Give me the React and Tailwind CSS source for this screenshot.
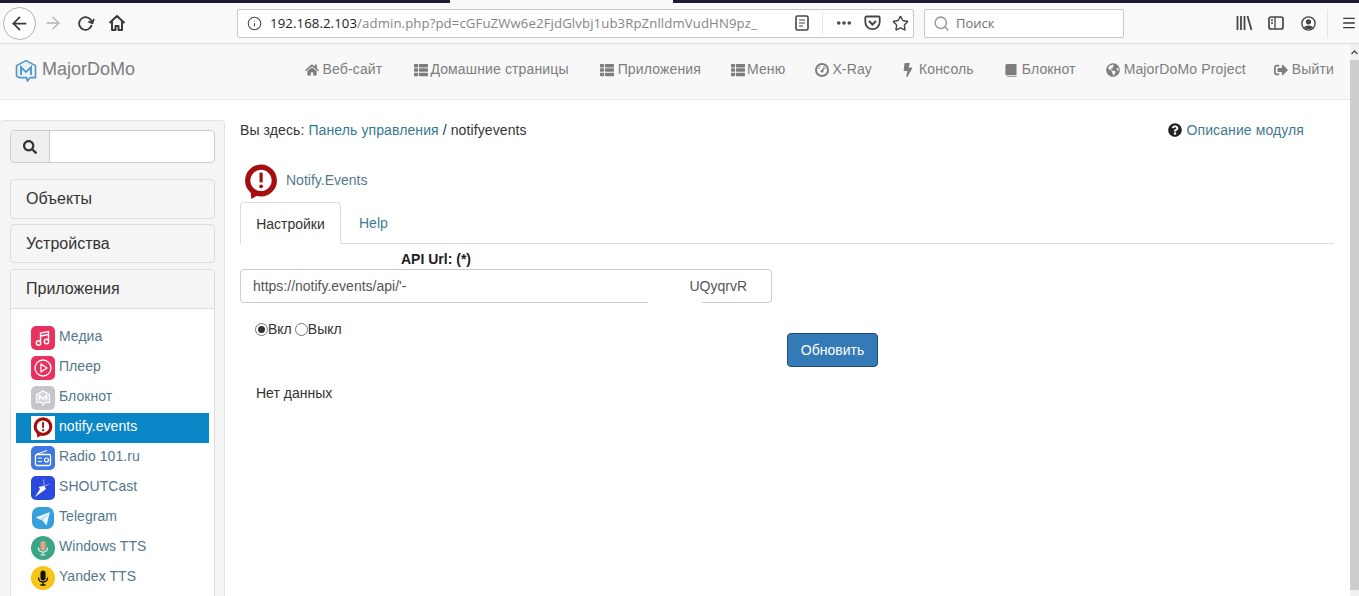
import React from "react";
import { ArrowLeft, ArrowRight, RotateCw, Info, Star, Search, Menu, MoreHorizontal } from "lucide-react";
import { FaHome, FaThList, FaBolt, FaGlobeAmericas, FaSignOutAlt, FaQuestionCircle, FaSearch } from "react-icons/fa";

function MdLogo({ size = 22, color = "#4f94c4", fill = "#e8f2f9" }) {
  return (
    <svg width={size} height={size * 1.1} viewBox="0 0 22 24" fill="none">
      <path d="M11 1.5 20.5 6.5V18.5H15L12.5 22 11.5 18.5H4L1.5 17V6.5Z" fill={fill} stroke={color} strokeWidth="1.6" strokeLinejoin="round" />
      <path d="M6 16V8L11 13 16 8V16" stroke={color} strokeWidth="1.8" fill="none" />
    </svg>
  );
}

function NotifyLogo({ size = 32 }) {
  return (
    <svg width={size} height={(size * 34) / 32} viewBox="0 0 32 34">
      <circle cx="16" cy="15.5" r="12.5" fill="#fff" stroke="#a50f10" strokeWidth="5" />
      <path d="M6 24 7 33 15 28Z" fill="#a50f10" />
      <rect x="14.6" y="8" width="3" height="9.5" rx="1" fill="#a50f10" />
      <circle cx="16.1" cy="21" r="1.8" fill="#a50f10" />
    </svg>
  );
}

function GaugeIcon({ size = 14, className }) {
  return (
    <svg width={size} height={size} viewBox="0 0 14 14" className={className}>
      <circle cx="7" cy="7" r="6" fill="#fff" stroke="currentColor" strokeWidth="2" />
      <path d="M3.2 5.5h1.2M5 3.3v1.2M9 3.3v1.2M9.6 5.5h1.2" stroke="currentColor" strokeWidth="1.2" />
      <path d="M7 8 9.2 4.8" stroke="currentColor" strokeWidth="1.4" />
      <circle cx="7" cy="8.2" r="1.4" fill="currentColor" />
    </svg>
  );
}

function SolidBook({ size = 14, className }) {
  return (
    <svg width={size} height={size} viewBox="0 0 14 14" className={className}>
      <path d="M3 1h9.5v11.5H3A1.6 1.6 0 0 1 1.4 11V2.6A1.6 1.6 0 0 1 3 1Z" fill="currentColor" />
      <path d="M3 12.5h9.5" stroke="#f8f8f8" strokeWidth=".8" />
      <path d="M3 13.4h9.5" stroke="currentColor" strokeWidth=".8" />
    </svg>
  );
}

const icons = {
  media: (
    <svg width="24" height="24" viewBox="0 0 24 24">
      <rect width="24" height="24" rx="5" fill="#e8315f" />
      <path d="M9.5 17V7l8-1.5V15" fill="none" stroke="#fff" strokeWidth="1.4" />
      <circle cx="7.5" cy="17" r="2.2" fill="none" stroke="#fff" strokeWidth="1.4" />
      <circle cx="15.5" cy="15.5" r="2.2" fill="none" stroke="#fff" strokeWidth="1.4" />
      <path d="M9.5 10l8-1.5" stroke="#fff" strokeWidth="1.4" />
    </svg>
  ),
  player: (
    <svg width="24" height="24" viewBox="0 0 24 24">
      <rect width="24" height="24" rx="5" fill="#e8315f" />
      <circle cx="12" cy="12" r="8" fill="none" stroke="#fff" strokeWidth="1.3" />
      <path d="M10 8l6 4-6 4Z" fill="none" stroke="#fff" strokeWidth="1.3" strokeLinejoin="round" />
    </svg>
  ),
  note: (
    <svg width="24" height="24" viewBox="0 0 24 24">
      <rect width="24" height="24" rx="5" fill="#c5c5cb" />
      <path d="M12 5l6.5 3.5v8H14l-2 2.5-1-2.5H5.5v-8Z" fill="#d6d6da" stroke="#fff" strokeWidth="1.2" />
      <path d="M8.5 14.5v-5L12 13l3.5-3.5v5" fill="none" stroke="#fff" strokeWidth="1.4" />
    </svg>
  ),
  notify: (
    <span className="flex h-6 w-6 items-center justify-center bg-white">
      <NotifyLogo size={20} />
    </span>
  ),
  radio: (
    <svg width="24" height="24" viewBox="0 0 24 24">
      <rect width="24" height="24" rx="5" fill="#3f78e0" />
      <path d="M5 8.5 16 4.5" stroke="#fff" strokeWidth="1.2" />
      <rect x="4.5" y="8.5" width="15" height="11" rx="1.5" fill="none" stroke="#fff" strokeWidth="1.3" />
      <path d="M7 12h4M7 15.5h4" stroke="#fff" strokeWidth="1.2" />
      <circle cx="15.5" cy="14" r="2" fill="none" stroke="#fff" strokeWidth="1.2" />
    </svg>
  ),
  shout: (
    <svg width="24" height="24" viewBox="0 0 24 24">
      <rect width="24" height="24" rx="5" fill="#2b49dc" />
      <path d="M20 7.5 13.5 10.5l1.5 2.5-11 8 5-8-1.5-2 5-1Z" fill="#fff" />
      <path d="M12 9.5c1.8-1 .8-4 .3-6" fill="none" stroke="#9fb0f5" strokeWidth="1" />
    </svg>
  ),
  telegram: (
    <svg width="24" height="24" viewBox="0 0 24 24">
      <rect x="1" y="1" width="22" height="22" rx="7" fill="#37a0da" />
      <path d="M4.5 11.5 19 6l-3.5 13.5-4-5Z" fill="#e8f4fb" />
      <path d="M11.5 14.5 19 6l-9.5 7Z" fill="#b9dcf0" />
    </svg>
  ),
  wintts: (
    <svg width="24" height="24" viewBox="0 0 24 24">
      <circle cx="12" cy="12" r="12" fill="#3ba587" />
      <rect x="9.5" y="5" width="5" height="9.5" rx="2.5" fill="#e9a084" />
      <path d="M7.5 11.5c0 6 9 6 9 0M12 16v3M9.5 19h5" fill="none" stroke="#e8f3ee" strokeWidth="1.2" />
    </svg>
  ),
  yantts: (
    <svg width="24" height="24" viewBox="0 0 24 24">
      <circle cx="12" cy="12" r="12" fill="#f5c518" />
      <rect x="9.5" y="4.5" width="5" height="10" rx="2.5" fill="#111" />
      <path d="M7.5 11.5c0 6 9 6 9 0M12 16v3M9.5 19h5" fill="none" stroke="#111" strokeWidth="1.3" />
    </svg>
  ),
};

const sideItems = [
  ["media", "Медиа"],
  ["player", "Плеер"],
  ["note", "Блокнот"],
  ["notify", "notify.events", true],
  ["radio", "Radio 101.ru"],
  ["shout", "SHOUTCast"],
  ["telegram", "Telegram"],
  ["wintts", "Windows TTS"],
  ["yantts", "Yandex TTS"],
];

const navItems = [
  [FaHome, "Веб-сайт", "ml-0 gap-[4px]"],
  [FaThList, "Домашние страницы", "ml-[32px] gap-[2px]"],
  [FaThList, "Приложения", "ml-[31px] gap-[4px]"],
  [FaThList, "Меню", "ml-[30px] gap-[2px]"],
  [GaugeIcon, "X-Ray", "ml-[30px] gap-[3px]"],
  [FaBolt, "Консоль", "ml-[29px] gap-[4px]"],
  [SolidBook, "Блокнот", "ml-[30px] gap-[4px]"],
  [FaGlobeAmericas, "MajorDoMo Project", "ml-[30px] gap-[4px]"],
  [FaSignOutAlt, "Выйти", "ml-[28px] gap-[4px]"],
];

function Accordion({ children, className }) {
  return (
    <div className={`flex items-center rounded-[4px] border border-[#dddddd] bg-[#f5f5f5] pl-[15px] text-[16px] text-[#333333] ${className}`}>
      {children}
    </div>
  );
}

function Radio({ on }) {
  return (
    <span className="flex h-[13px] w-[13px] items-center justify-center rounded-full border border-[#767676] bg-white">
      {on && <span className="h-[7px] w-[7px] rounded-full bg-[#333333]" />}
    </span>
  );
}

export default function App() {
  return (
    <div className="flex h-[596px] w-[1359px] flex-col overflow-hidden bg-white font-['Liberation_Sans',sans-serif] text-[14px] text-[#333333]">
      {/* Window strip */}
      <div className="flex h-[3px] shrink-0">
        <div className="w-[450px] bg-[#1b1b33]" />
        <div className="w-[223px] bg-[#f9f9fa]" />
        <div className="flex-1 bg-[#1b1b33]" />
      </div>

      {/* Browser toolbar */}
      <div className="flex h-[41px] shrink-0 items-center border-b border-[#dcdcde] bg-[#f9f9fa] font-['Open_Sans',sans-serif]">
        <div className="ml-[3px] flex h-[33px] w-[33px] items-center justify-center rounded-full border border-[#b1b1b3] bg-white">
          <ArrowLeft size={21} strokeWidth={2} className="text-[#38383d]" />
        </div>
        <ArrowRight size={20} strokeWidth={1.6} className="ml-[7px] text-[#b4b4b6]" />
        <RotateCw size={17} strokeWidth={2.6} className="ml-[14px] rotate-[20deg] text-[#38383d]" />
        <svg width="18" height="18" viewBox="0 0 18 18" className="ml-[14px]" fill="none" stroke="#38383d" strokeWidth="2">
          <path d="M1.5 9 9 2l7.5 7M4 7.5V16h3.5v-4h3v4H14V7.5" strokeLinejoin="round" />
        </svg>
        <div className="ml-[111px] flex h-[29px] w-[677px] items-center rounded-[2px] border border-[#c8c8ca] bg-white">
          <Info size={15} strokeWidth={1.7} className="ml-[9px] text-[#45454a]" />
          <span className="ml-[8px] w-[490px] truncate whitespace-nowrap pt-[1px] text-[13.2px] tracking-[0.1px] text-[#85858a]">
            <span className="text-[#1c1c20]">192.168.2.103</span>/admin.php?pd=cGFuZWw6e2FjdGlvbj1ub3RpZnlldmVudHN9pz_
          </span>
          <svg width="14" height="16" viewBox="0 0 14 16" className="ml-[35px]" fill="none" stroke="#45454a" strokeWidth="1.6">
            <rect x="1" y="1" width="12" height="14" rx="1.5" />
            <path d="M4 5h6M4 8h6M4 11h4" strokeWidth="1.2" />
          </svg>
          <div className="ml-[13px] h-[22px] w-px bg-[#e4e4e6]" />
          <MoreHorizontal size={18} strokeWidth={2.8} className="ml-[12px] text-[#45454a]" />
          <svg width="17" height="16" viewBox="0 0 17 16" className="ml-[11px]" fill="none" stroke="#45454a" strokeWidth="1.8">
            <path d="M2.5 1.5h12A1.2 1.2 0 0 1 15.7 2.7V7A7.2 7.2 0 0 1 1.3 7V2.7A1.2 1.2 0 0 1 2.5 1.5Z" />
            <path d="M5 6l3.5 3.5L12 6" strokeWidth="2" />
          </svg>
          <Star size={17} strokeWidth={2} className="ml-[11px] text-[#45454a]" />
        </div>
        <div className="ml-[10px] flex h-[29px] w-[200px] items-center rounded-[2px] border border-[#c8c8ca] bg-white">
          <Search size={17} strokeWidth={2.2} className="ml-[8px] text-[#9b9b9f]" />
          <span className="ml-[6px] pt-[1px] text-[13px] text-[#6e6e73]">Поиск</span>
        </div>
        <svg width="17" height="16" viewBox="0 0 17 16" className="ml-[112px]" fill="none" stroke="#45454a" strokeWidth="1.8">
          <path d="M1.5 1v14M5 1v14M8.5 1v14M11.5 1l4 14" />
        </svg>
        <svg width="16" height="14" viewBox="0 0 16 14" className="ml-[15px]" fill="none" stroke="#45454a" strokeWidth="1.7">
          <rect x="1" y="1" width="14" height="12" rx="2" />
          <path d="M7 1v12M3 4h2M3 7h2" strokeWidth="1.3" />
        </svg>
        <svg width="15" height="15" viewBox="0 0 15 15" className="ml-[17px]">
          <circle cx="7.5" cy="7.5" r="6.6" fill="none" stroke="#45454a" strokeWidth="1.4" />
          <circle cx="7.5" cy="5.8" r="2.6" fill="#45454a" />
          <path d="M3 11.5C4 8.8 11 8.8 12 11.5 10 13.6 5 13.6 3 11.5Z" fill="#45454a" />
        </svg>
        <div className="ml-[11px] h-[29px] w-px bg-[#e4e4e6]" />
        <Menu size={16} strokeWidth={2} className="ml-[13px] text-[#38383d]" />
      </div>

      <div className="flex min-h-0 flex-1">
        <div className="flex min-w-0 flex-1 flex-col">
          {/* Navbar */}
          <div className="flex h-[56px] shrink-0 items-center border-b border-[#e7e7e7] bg-[#f8f8f8] pb-[4px] pr-[16px] text-[#7d7d7d]">
            <div className="ml-[15px] flex items-center">
              <span className="mt-[4px] block">
                <MdLogo />
              </span>
              <span className="ml-[5px] text-[18px]">MajorDoMo</span>
            </div>
            <div className="ml-auto flex items-center">
              {navItems.map(([Icon, label, cls]) => (
                <div key={label} className={`flex items-center tracking-[0.14px] ${cls}`}>
                  <Icon size={14} className="shrink-0" />
                  <span>{label}</span>
                </div>
              ))}
            </div>
          </div>

          <div className="flex min-h-0 flex-1">
            {/* Sidebar */}
            <aside className="mt-[20px] flex w-[225px] shrink-0 flex-col rounded-t-[4px] border border-b-0 border-l-0 border-[#e3e3e3] bg-[#f5f5f5] pl-[10px] pr-[9px] pt-[9px]">
              <div className="flex h-[33px] shrink-0 rounded-[4px] border border-[#cccccc] bg-white">
                <div className="flex w-[39px] items-center justify-center rounded-l-[4px] border-r border-[#cccccc] bg-[#eeeeee]">
                  <FaSearch size={14} className="text-[#333333]" />
                </div>
              </div>
              <Accordion className="mt-[16px] h-[40px] shrink-0">Объекты</Accordion>
              <Accordion className="mt-[5px] h-[39px] shrink-0">Устройства</Accordion>
              <div className="mt-[6px] min-h-0 flex-1 rounded-t-[4px] border border-b-0 border-[#dddddd] bg-white">
                <div className="flex h-[39px] items-center border-b border-[#dddddd] bg-[#f5f5f5] pl-[15px] text-[16px]">Приложения</div>
                <div className="pl-[5px] pr-[5px] pt-[14px]">
                  {sideItems.map(([key, label, active]) => (
                    <div
                      key={key}
                      className={`flex h-[30px] items-center pl-[15px] tracking-[0.05px] ${active ? "bg-[#0a87c7] text-white" : "text-[#53788c]"}`}
                    >
                      <span className="mr-[4px] block h-6 w-6 shrink-0">{icons[key]}</span>
                      <span className="mb-[4px]">{label}</span>
                    </div>
                  ))}
                </div>
              </div>
            </aside>

            {/* Main */}
            <main className="min-w-0 flex-1 pl-[15px] pr-[16px]">
              <div className="mt-[20px] flex h-[20px] items-center tracking-[0.1px]">
                <span>Вы здесь:&nbsp;</span>
                <span className="text-[#337a8f]">Панель управления</span>
                <span>&nbsp;/ notifyevents</span>
                <span className="ml-auto mr-[30px] flex items-center gap-[4px] text-[#427a8c]">
                  <FaQuestionCircle size={14} className="text-[#222222]" />
                  Описание модуля
                </span>
              </div>
              <div className="ml-[4px] mt-[25px] flex h-[34px] items-center">
                <NotifyLogo size={34} />
                <span className="mb-[4px] ml-[8px] text-[14px] text-[#53788c]">Notify.Events</span>
              </div>
              <div className="mt-[3px] flex h-[42px] border-b border-[#dddddd]">
                <div className="-mb-px flex h-[42px] w-[101px] items-center justify-center rounded-t-[4px] border border-b-0 border-[#dddddd] bg-white pt-[2px]">
                  Настройки
                </div>
                <div className="ml-[18px] flex items-center pt-[2px] text-[#3f7c93]">Help</div>
              </div>
              <div className="ml-[161px] mt-[7px] h-[17px] text-[14px] font-bold leading-[17px] text-[#222222]">API Url: (*)</div>
              <div className="relative mt-[1px] flex h-[34px] w-[532px] items-center justify-between rounded-[4px] border border-[#cccccc] bg-white pl-[12px] pr-[24px] text-[#555555]">
                <span>https://notify.events/api/'-</span>
                <span>UQyqrvR</span>
                <div className="absolute left-[169px] top-[1px] h-[28px] w-[262px] bg-white" />
                <div className="absolute left-[407px] top-[25px] h-[12px] w-[54px] bg-white" />
              </div>
              <div className="flex">
                <div className="ml-[15px] mt-[18px] flex h-[16px] w-[532px] items-center">
                  <Radio on />
                  <span>Вкл</span>
                  <span className="ml-[3px]"><Radio /></span>
                  <span>Выкл</span>
                </div>
                <div className="mt-[30px] flex h-[34px] w-[91px] items-center justify-center rounded-[4px] border border-[#204d74] bg-[#337ab7] text-white">
                  Обновить
                </div>
              </div>
              <div className="ml-[16px] mt-[16px]">Нет данных</div>
            </main>
          </div>
        </div>

        {/* Scrollbar */}
        <div className="flex w-[9px] shrink-0 flex-col bg-[#f1f1f1]">
          <div className="flex h-[16px] items-center justify-center">
            <svg width="7" height="5" viewBox="0 0 7 5" fill="none" stroke="#505050" strokeWidth="1.4">
              <path d="M.5 4 3.5 1l3 3" />
            </svg>
          </div>
          <div className="h-[530px] bg-[#cdcdcd]" />
        </div>
      </div>
    </div>
  );
}
